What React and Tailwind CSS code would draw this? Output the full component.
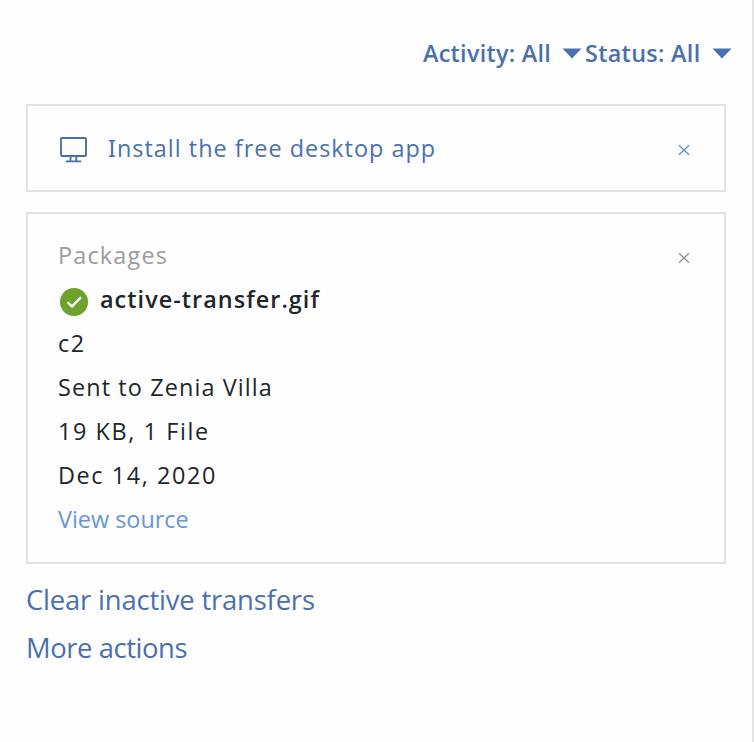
function CloseIcon({ className }) {
  return (
    <svg className={className} width="12" height="12" viewBox="0 0 12 12" fill="none" stroke="currentColor" strokeWidth="1.3">
      <path d="M1 1.2 11 10.8M11 1.2 1 10.8" />
    </svg>
  );
}

function Caret() {
  return (
    <svg width="20" height="11" viewBox="0 0 20 11" fill="currentColor">
      <path d="M0.5 0.5H19.5L10 10.5Z" />
    </svg>
  );
}

function DesktopIcon() {
  return (
    <svg className="mt-1" width="28" height="26" viewBox="0 0 28 26" fill="none" stroke="currentColor" strokeWidth="1.9">
      <rect x="2" y="1" width="25" height="18" rx="1" />
      <path d="M11.5 19v5M17.3 19v5M6.8 24.4h15.4" />
    </svg>
  );
}

function CheckIcon() {
  return (
    <svg className="mt-[5px]" width="28" height="28" viewBox="0 0 28 28" fill="none">
      <circle cx="14" cy="14" r="14" fill="#6ba32d" />
      <path d="M7.5 14.2 12 18.4 21 9.4" stroke="#fff" strokeWidth="2.2" />
    </svg>
  );
}

export default function App() {
  return (
    <div className="h-[742px] w-[754px] overflow-hidden border-r-2 border-[#e4e3e5] bg-[#fefefe] font-['Open_Sans','Noto_Sans',sans-serif] text-[23.4px] leading-[44px] whitespace-nowrap text-[#1c262b]">
      <div className="flex h-[104px] items-start justify-end pt-[31px] pr-5 font-semibold text-[#4a70ad]">
        <div className="flex w-[159px] items-center justify-between">
          <span className="tracking-[0.26px]">Activity: All</span>
          <Caret />
        </div>
        <div className="flex w-[150px] items-center justify-between pl-[3px]">
          <span className="tracking-[0.3px]">Status: All</span>
          <Caret />
        </div>
      </div>

      <div className="ml-[26px] flex h-[88px] w-[700px] items-center border-2 border-[#e2e2e3] pr-[34px] pb-px pl-[31px] text-[#4a70ad]">
        <DesktopIcon />
        <span className="ml-[21px] tracking-[1.02px]">
          <span className="font-['Noto_Sans',sans-serif]">I</span>nstall the free desktop app
        </span>
        <CloseIcon className="mt-[5px] ml-auto text-[#5b92cf]" />
      </div>

      <div className="mt-5 ml-[26px] h-[352px] w-[700px] border-2 border-[#e2e2e3] pt-[19px] pr-[34px] pl-[30px]">
        <div className="flex items-center justify-between text-[#9b9c9f]">
          <span className="tracking-[1.2px]">Packages</span>
          <CloseIcon className="mt-[6px] text-[#8e8e92]" />
        </div>
        <div className="flex h-11 items-center pl-[2px]">
          <CheckIcon />
          <span className="ml-3 font-semibold tracking-[1.05px]">active-transfer.gif</span>
        </div>
        <div className="tracking-[1.6px]">c2</div>
        <div className="tracking-[1.12px]">Sent to Zenia Villa</div>
        <div className="tracking-[1.6px]">19 KB, 1 File</div>
        <div className="tracking-[1.6px]">Dec 14, 2020</div>
        <div className="tracking-[0px] text-[#6496dc]">View source</div>
      </div>

      <div className="mt-[12px] ml-[26px] text-[27.4px] leading-[48px] text-[#4a70ad]">
        <div className="tracking-[-0.17px]">Clear inactive transfers</div>
        <div className="tracking-[-0.42px]">More actions</div>
      </div>
    </div>
  );
}
